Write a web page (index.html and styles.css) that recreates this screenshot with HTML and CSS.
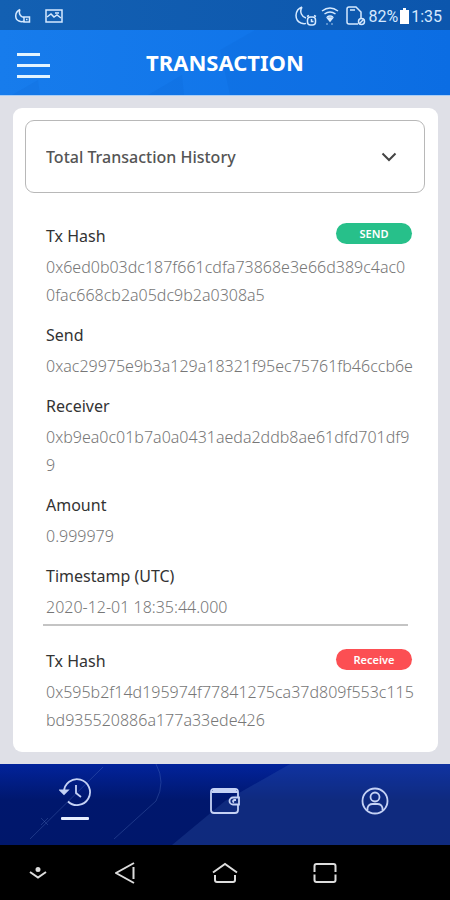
FILE: index.html

```html
<!DOCTYPE html>
<html lang="en">
<head>
<meta charset="utf-8">
<meta name="viewport" content="width=device-width, initial-scale=1">
<title>Transaction</title>
<link rel="stylesheet" href="styles.css">
</head>
<body>
<div class="status">
  <div class="status-group status-left">
    <svg width="16" height="16" viewBox="0 0 16 16" class="icon"><path d="M5 1.500C-.5 4-.5 11 4 13c2 1 4 .8 5.500 0M5 1.500C3.500 5 5 9 9 9.500"/><path d="M9 9h5.500v5H9z"/><path d="M11 11.500h1.500"/></svg>
    <svg width="18" height="14" viewBox="0 0 18 14" class="icon"><path d="M1 1h16v12H1z"/><path d="M2 8l4-3 3 3 3-2 4 3M10 4h4"/></svg>
  </div>
  <div class="status-group">
    <svg width="22" height="20" viewBox="0 0 22 20" class="icon"><path d="M7 1C-.5 4-1 14 6 17c2 .8 4 .8 5 .3M7 1C4 6 7 11 11 12"/><rect x="12.500" y="11" width="8" height="8" rx="3"/><path d="M16.500 13v2.500h2M12 10.500l2-1M21 10.500l-2-1"/></svg>
    <svg width="18" height="20" viewBox="0 0 18 20" class="icon wifi"><path d="M1 5q8-6 16 0M3.500 8q5.500-4 11 0M6 11q3-2 6 0"/><path d="M6.500 12h5L9 15z" fill="currentColor"/><path d="M6 17v2M11 17v2" opacity=".5"/></svg>
    <svg width="20" height="20" viewBox="0 0 20 20" class="icon"><path d="M12 18H3q-2 0-2-2V3q0-2 2-2h7l5 5v6M4 4h5"/><circle cx="15.500" cy="15.500" r="3"/><path d="M13 18l5-5"/></svg>
    <span>82%</span>
    <svg width="9" height="16" viewBox="0 0 9 16" class="battery"><path d="M3 0h3v2h3v14H0V2h3z"/></svg>
    <span>1:35</span>
  </div>
</div>

<header class="header">
  <svg class="pattern" viewBox="0 0 450 65" preserveAspectRatio="none" aria-hidden="true"><path d="M148 65l34-20 2 20zM12 65l26-15 2 15zM220 20l35-20h195v65H230z" fill="#0558c8" opacity=".12"/></svg>
  <button class="menu" aria-label="Menu"><span class="bar bar-short"></span><span class="bar"></span><span class="bar"></span></button>
  <h1>TRANSACTION</h1>
</header>

<main class="main">
  <div class="card">
    <div class="picker">
      <select aria-label="Transaction filter"><option>Total Transaction History</option></select>
      <svg class="chevron" width="16" height="10" viewBox="0 0 16 10"><path d="M1.500 1.500L8 8l6.500-6.500"/></svg>
    </div>
    <article class="record">
      <span class="badge badge-send">SEND</span>
      <dl>
        <div><dt>Tx Hash</dt><dd>0x6ed0b03dc187f661cdfa73868e3e66d389c4ac0<br>0fac668cb2a05dc9b2a0308a5</dd></div>
        <div><dt>Send</dt><dd>0xac29975e9b3a129a18321f95ec75761fb46ccb6e</dd></div>
        <div><dt>Receiver</dt><dd>0xb9ea0c01b7a0a0431aeda2ddb8ae61dfd701df9<br>9</dd></div>
        <div><dt>Amount</dt><dd>0.999979</dd></div>
        <div><dt>Timestamp (UTC)</dt><dd>2020-12-01 18:35:44.000</dd></div>
      </dl>
    </article>
    <article class="record">
      <span class="badge badge-receive">Receive</span>
      <dl>
        <div><dt>Tx Hash</dt><dd>0x595b2f14d195974f77841275ca37d809f553c115<br>bd935520886a177a33ede426</dd></div>
      </dl>
    </article>
  </div>
</main>

<nav class="tabs">
  <svg class="pattern" viewBox="0 0 450 81" preserveAspectRatio="none" aria-hidden="true">
    <path d="M172 81L225 37 290 0H450V81z" fill="#3c64b4" opacity=".25"/>
    <path d="M103 3L30 75M156 0q10 18 0 37l-42 38M41 54l7 7M48 54l-7 7" fill="none" stroke="#6080c8" opacity=".3"/>
  </svg>
  <a href="#history" class="tab tab-active" aria-label="History">
    <svg width="32" height="30" viewBox="0 0 32 30" class="icon tab-icon"><path d="M5 15A13 13 0 1 1 9 24.500"/><path d="M1.500 13.500h7L5 17z" fill="currentColor"/><path d="M17 8v8l5 4"/></svg>
  </a>
  <a href="#wallet" class="tab" aria-label="Wallet">
    <svg width="30" height="26" viewBox="0 0 30 26" class="icon tab-icon"><path d="M28 9V4q0-3-3-3H4Q1 1 1 4v18q0 3 3 3h21q3 0 3-3v-5M2 4h26M3 2.500h23"/><path d="M29 9.500h-6a3.500 3.500 0 0 0 0 7h6z"/><path d="M26 12h-2q-2 1 0 2.500"/></svg>
  </a>
  <a href="#profile" class="tab" aria-label="Profile">
    <svg width="28" height="28" viewBox="0 0 28 28" class="icon tab-icon"><circle cx="14" cy="14" r="12.500"/><circle cx="14" cy="10" r="4.500"/><path d="M6.500 23v-2q1-4 5-4h5q4 0 5 4v2"/></svg>
  </a>
</nav>

<div class="system">
  <button aria-label="Hide"><svg width="18" height="12" viewBox="0 0 18 12" class="icon"><path d="M1 5l8 5.500L17 5"/><circle cx="9" cy="2.500" r="1.500" fill="currentColor"/></svg></button>
  <button aria-label="Back"><svg width="20" height="22" viewBox="0 0 20 22" class="icon"><path d="M19 1L1 11l18 10M18.500 5v12"/></svg></button>
  <button aria-label="Home"><svg width="26" height="22" viewBox="0 0 26 22" class="icon"><path d="M1 10.500L13 2l12 8.500M3 13v5q0 2 2 2h16q2 0 2-2v-5"/></svg></button>
  <button aria-label="Recent apps"><svg width="24" height="20" viewBox="0 0 24 20" class="icon"><path d="M1.500 9V3q0-2 2-2h17q2 0 2 2v6M1.500 11.500V17q0 2 2 2h17q2 0 2-2v-5.500"/></svg></button>
</div>
</body>
</html>
```

FILE: styles.css

```css
* { box-sizing: border-box; }
body {
  margin: 0;
  min-height: 100vh;
  display: flex;
  flex-direction: column;
  background: #dfe0e7;
  font-family: "Noto Sans", sans-serif;
}
button { padding: 0; border: 0; background: none; color: inherit; }
.icon { display: block; fill: none; stroke: currentColor; stroke-width: 1.5; }
.pattern { position: absolute; inset: 0; width: 100%; height: 100%; }

.status {
  height: 30px;
  padding: 2px 8px 0 15px;
  display: flex;
  align-items: center;
  justify-content: space-between;
  background: linear-gradient(90deg, #1360b2, #0c56ad);
  color: #d5e9ff;
  font: 16px Roboto, sans-serif;
}
.status-group { display: flex; align-items: center; gap: 2px; }
.status-left { gap: 14px; }
.wifi { margin: 0 5px 0 2px; }
.battery { fill: #fff; }

.header {
  position: relative;
  height: 66px;
  display: grid;
  grid-template-columns: 1fr auto 1fr;
  align-items: center;
  padding: 0 17px;
  background: linear-gradient(90deg, #177cec, #0c70e8);
  border-bottom: 1px solid #a9cdf5;
  color: #fff;
}
.header h1 { position: relative; margin: 0; padding-bottom: 2px; font-size: 22px; line-height: 30px; font-weight: 700; }
.menu { position: relative; width: 33px; padding-top: 6px; display: flex; flex-direction: column; gap: 8px; }
.bar { width: 33px; height: 3px; background: #e3f4ff; }
.bar-short { width: 23px; }

.main { flex: 1; padding: 12px 12px 12px 13px; }
.card { padding: 12px 13px 18px 12px; background: #fff; border-radius: 9px; }
.picker { position: relative; }
.picker select {
  display: block;
  width: 100%;
  height: 73px;
  padding: 0 48px 0 20px;
  appearance: none;
  border: 1px solid #b8b8b8;
  border-radius: 9px;
  background: #fff;
  color: #555;
  font: 500 16px "Noto Sans", sans-serif;
}
.chevron {
  position: absolute;
  right: 28px;
  top: 32px;
  fill: none;
  stroke: #444;
  stroke-width: 2;
  pointer-events: none;
}

.record { position: relative; margin: 0 17px 0 18px; padding: 22px 0 3px 3px; }
.picker + .record { padding-top: 30px; }
.record + .record { border-top: 2px solid #c4c4c4; padding-bottom: 0; }
.record dl { margin: 0; display: flex; flex-direction: column; gap: 13px; }
.record dl div { display: flex; flex-direction: column; gap: 3px; }
dt { color: #333; font-size: 16px; line-height: 27px; }
dd { margin: 0; color: #777; font-size: 16px; line-height: 28px; font-weight: 300; white-space: nowrap; }
.badge {
  position: absolute;
  top: 30px;
  right: -4px;
  width: 76px;
  border-radius: 11px;
  color: #fff;
  font-size: 11px;
  font-weight: 600;
  line-height: 21px;
  text-align: center;
}
.badge-send { background: #27c08a; }
.badge-receive { top: 23px; background: #fc4f53; }

.tabs {
  position: relative;
  height: 81px;
  display: grid;
  grid-template-columns: repeat(3, 1fr);
  background: linear-gradient(#02239b, #00176d 45%, #00176b);
  color: #c5d2f5;
}
.tab {
  position: relative;
  display: flex;
  flex-direction: column;
  align-items: center;
  justify-content: center;
  padding-bottom: 8px;
  color: inherit;
}
.tab-icon { stroke-width: 1.8; }
.tab-active { gap: 10px; padding-bottom: 12px; }
.tab-active::after { content: ""; width: 28px; height: 3px; background: #e8efff; border-radius: 1px; }

.system {
  height: 55px;
  padding-right: 75px;
  display: grid;
  grid-template-columns: 75px repeat(3, 1fr);
  align-items: center;
  background: #000;
  color: #ddd;
}
.system .icon { stroke-width: 2; }
.system button { display: flex; justify-content: center; }
```
